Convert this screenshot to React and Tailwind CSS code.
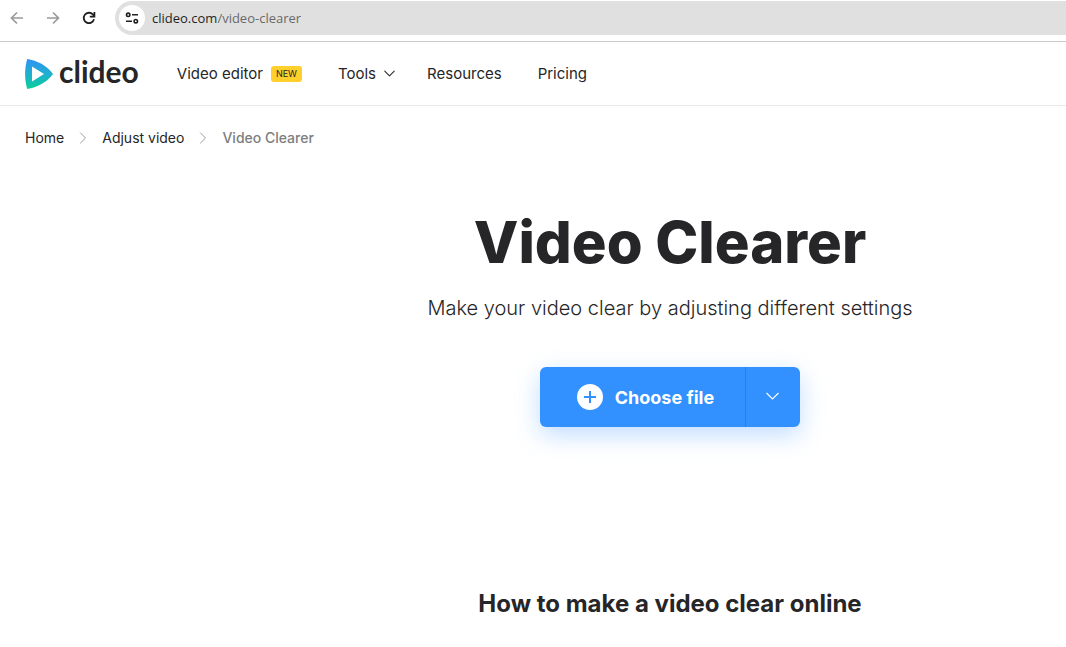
import React from 'react';
import { ChevronDown, ChevronRight } from 'lucide-react';

const crumbs = [
  { label: 'Home', href: '#home' },
  { label: 'Adjust video', href: '#adjust' },
];

function BrowserBar() {
  return (
    <div className="flex items-center h-[42px] pb-[5px] border-b border-[#cbcbcb] bg-white">
      <div className="flex items-center gap-5 pl-[9px]">
        <button aria-label="Back" className="text-[#9b9b9b]">
          <svg className="w-4 h-4" viewBox="0 0 16 16" fill="none" stroke="currentColor" strokeWidth="1.7">
            <path d="M14 8H3M8 2.5L2.5 8L8 13.5" />
          </svg>
        </button>
        <button aria-label="Forward" className="text-[#9b9b9b]">
          <svg className="w-4 h-4" viewBox="0 0 16 16" fill="none" stroke="currentColor" strokeWidth="1.7">
            <path d="M2 8H13M8 2.5L13.5 8L8 13.5" />
          </svg>
        </button>
        <button aria-label="Reload" className="text-[#1f1f1f]">
          <svg className="w-4 h-4" viewBox="0 0 16 16" fill="none" stroke="currentColor" strokeWidth="1.8">
            <path d="M13 9.3A5.2 5.2 0 1 1 11.8 4.4L13.2 6" />
            <path d="M13.4 2V6.6H8.8" />
          </svg>
        </button>
      </div>
      <div className="flex flex-1 items-center ml-[18px] h-[34px] rounded-l-full bg-[#e0e0e0] pl-1">
        <button aria-label="Site information" className="flex items-center justify-center w-[26px] h-[26px] rounded-full bg-white text-[#1f1f1f]">
          <svg className="w-4 h-4" viewBox="0 0 16 16" fill="none" stroke="currentColor" strokeWidth="1.6">
            <circle cx="4.2" cy="4.8" r="1.7" />
            <path d="M8 4.8H14M2 11.2H8" />
            <circle cx="11.8" cy="11.2" r="1.7" />
          </svg>
        </button>
        <span className="ml-[7px] font-['Open_Sans',sans-serif] text-[13px] leading-5 text-[#1f1f1f]">
          clideo.com<span className="text-[#6a6a6a]">/video-clearer</span>
        </span>
      </div>
    </div>
  );
}

function Logo() {
  return (
    <a href="#home" className="flex items-center gap-[5px]">
      <svg className="w-[29px] h-8" viewBox="0 0 29 32">
        <defs>
          <linearGradient id="logo-fill" x1="0" y1="0" x2="0" y2="1">
            <stop offset="0" stopColor="#3192f5" />
            <stop offset="0.5" stopColor="#1fafd0" />
            <stop offset="1" stopColor="#0acf97" />
          </linearGradient>
        </defs>
        <path
          fill="url(#logo-fill)"
          fillRule="evenodd"
          d="M2.2 1C12 2.4 22 7.6 28 16C22 24.4 12 29.6 2.2 31C-.6 21 -.6 11 2.2 1ZM7 8.6V23.4L19 16Z"
        />
      </svg>
      <span className="pb-[6px] font-['Lato',sans-serif] text-[30px] leading-8 font-bold text-[#262628]">clideo</span>
    </a>
  );
}

function Header() {
  return (
    <header className="flex items-center h-16 px-[25px] border-b border-[#e9e9e9]">
      <Logo />
      <nav className="flex items-center gap-9 ml-[38px] text-[15px] leading-5">
        <a href="#editor" className="flex items-center gap-2">
          Video editor
          <span className="rounded-[3px] bg-[#ffd02b] px-[5px] text-[9px] leading-4">NEW</span>
        </a>
        <button className="flex items-center gap-1 -mr-2">
          Tools
          <ChevronDown className="w-[19px] h-[19px]" strokeWidth={1.3} />
        </button>
        <a href="#resources">Resources</a>
        <a href="#pricing">Pricing</a>
      </nav>
    </header>
  );
}

function Breadcrumbs() {
  return (
    <nav aria-label="Breadcrumb" className="flex items-center gap-[9px] px-[25px] pt-[22px] text-[14px] leading-5">
      {crumbs.map((crumb) => (
        <React.Fragment key={crumb.label}>
          <a href={crumb.href}>{crumb.label}</a>
          <ChevronRight className="w-5 h-5 text-[#9b9b9b]" strokeWidth={1.2} />
        </React.Fragment>
      ))}
      <span className="text-[#7d7d7e] font-medium">Video Clearer</span>
    </nav>
  );
}

export default function App() {
  return (
    <div className="min-h-screen bg-white font-['Inter',sans-serif] text-[#262628] overflow-x-hidden">
      <BrowserBar />
      <Header />
      <Breadcrumbs />

      <main className="flex flex-col items-center pl-[274px] pt-[58px] text-center">
        <h1 className="text-[58px] leading-[72px] font-extrabold">Video Clearer</h1>
        <p className="mt-4 text-[20px] leading-7 font-light">
          Make your video clear by adjusting different settings
        </p>

        <div className="flex mt-[45px] h-[60px] rounded-md bg-[#3290ff] text-white shadow-[0_8px_24px_rgba(50,144,255,0.3)]">
          <button className="flex items-center gap-3 pl-[37px] pr-[31px] text-[18px] font-bold">
            <svg className="w-[26px] h-[26px]" viewBox="0 0 26 26">
              <circle cx="13" cy="13" r="13" fill="#fff" />
              <path d="M13 7V19M7 13H19" stroke="#3290ff" strokeWidth="2" />
            </svg>
            Choose file
          </button>
          <button aria-label="More sources" className="flex items-center justify-center w-[55px] border-l border-[#2a7fe6]">
            <svg className="w-4 h-4" viewBox="0 0 16 16" fill="none" stroke="currentColor" strokeWidth="1.1">
              <path d="M1.5 4L7.5 10L13.5 4" />
            </svg>
          </button>
        </div>

        <h2 className="mt-[161px] text-[24px] leading-8 font-bold">How to make a video clear online</h2>
      </main>
    </div>
  );
}
